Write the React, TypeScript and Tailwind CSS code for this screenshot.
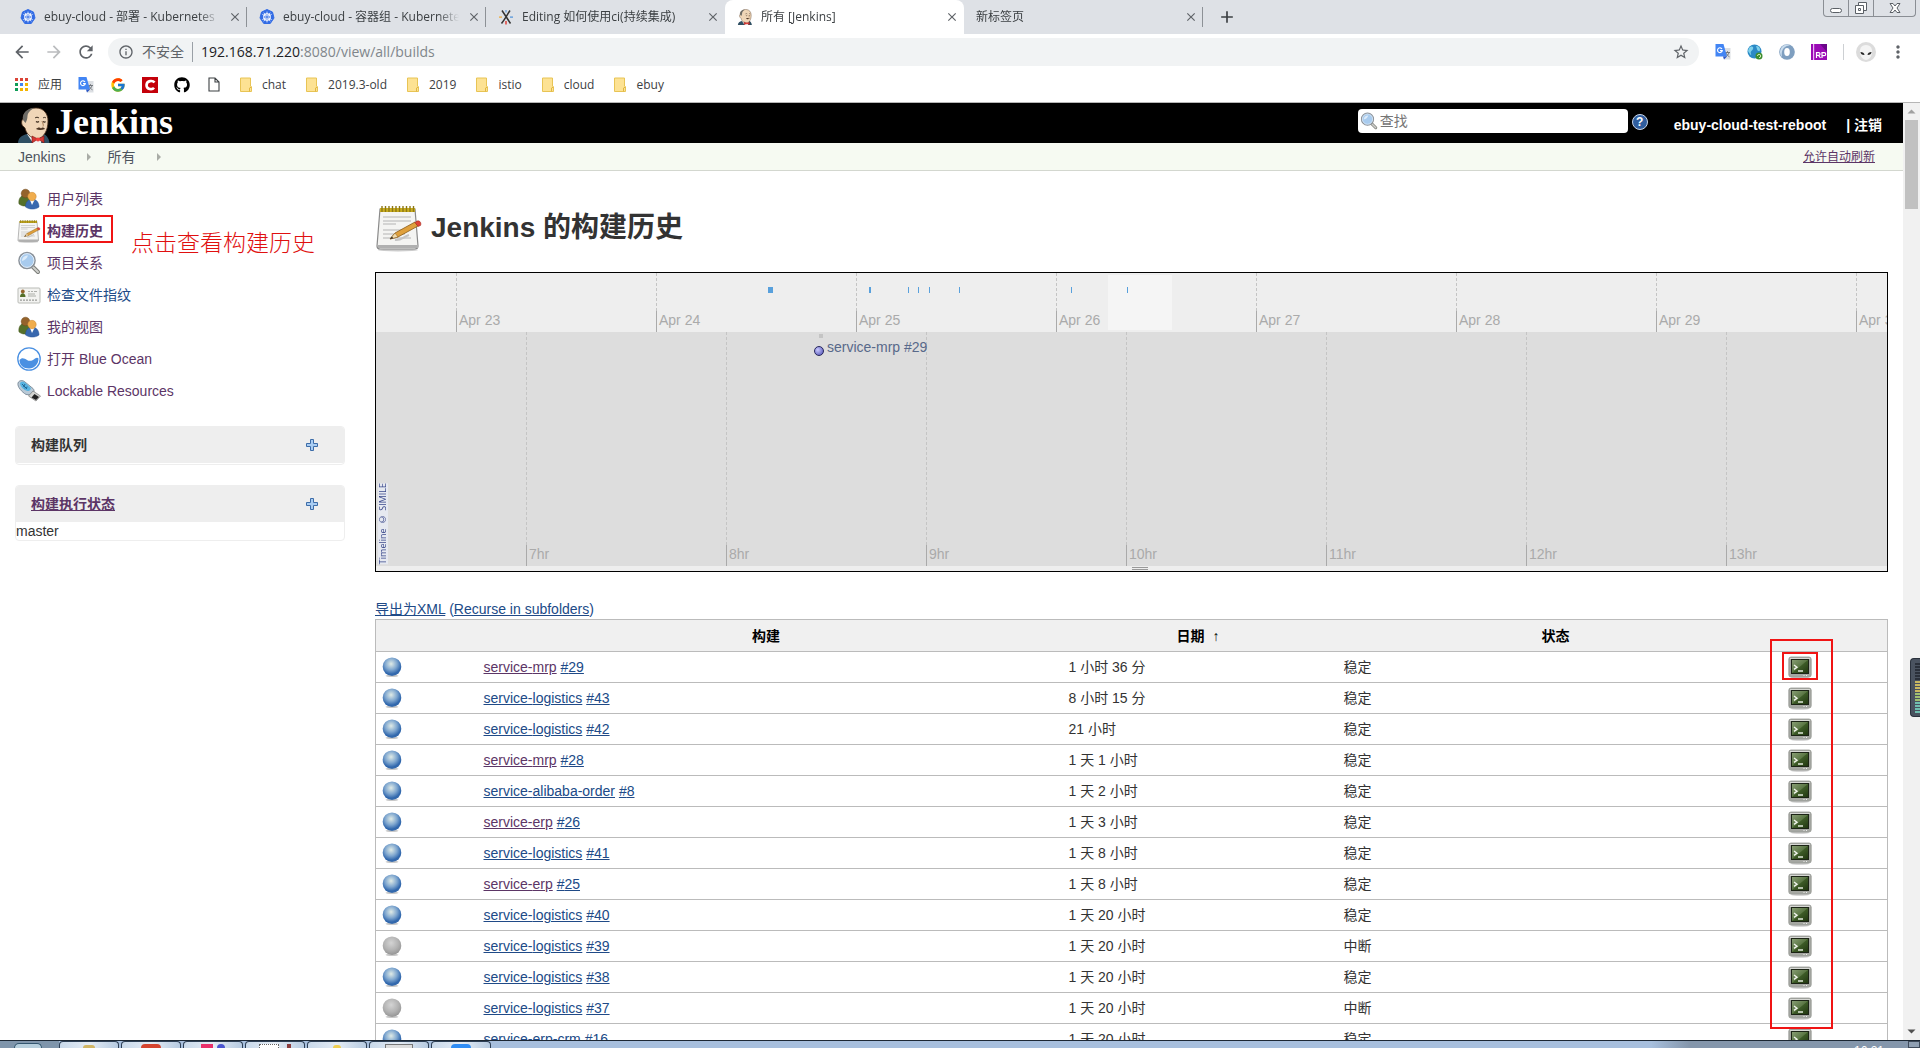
import React from 'react';
import { MdAdd, MdArrowBack, MdArrowForward, MdClose, MdInfoOutline, MdMoreVert, MdRefresh, MdStarBorder } from 'react-icons/md';
import { FaGithub } from 'react-icons/fa';
import { FcGoogle } from 'react-icons/fc';

/* ---------- icons ---------- */

const KubeIcon = () => (
  <svg viewBox="0 0 32 32" className="size-4 shrink-0" aria-hidden="true">
    <path d="M16 1 L27 6.2 L30 18 L22.5 29 H9.5 L2 18 L5 6.2 Z" fill="#326ce5" stroke="#326ce5" strokeWidth="2" strokeLinejoin="round" />
    <circle cx="16" cy="16" r="6.5" fill="none" stroke="#fff" strokeWidth="2.2" />
    <g stroke="#fff" strokeWidth="1.6" strokeLinecap="round">
      <path d="M16 6v20M7.3 11l17.4 10M7.3 21l17.4-10M10 8l12 16M22 8L10 24" />
    </g>
    <circle cx="16" cy="16" r="2" fill="#326ce5" />
  </svg>
);

const WikiIcon = () => (
  <svg viewBox="0 0 16 16" className="size-4 shrink-0" aria-hidden="true">
    <path d="M4 1.500C7 6 9 9 12.500 14.500M12 1.500C9 6 7 10 3.500 14.500" fill="none" stroke="#333" strokeWidth="1.500" />
    <rect x="7.500" y="1" width="1" height="2.500" fill="#4a90d9" />
    <rect x="1" y="7.500" width="3" height="1.200" fill="#f0a830" />
    <rect x="12" y="7.500" width="3" height="1.200" fill="#4a90d9" />
    <rect x="7.300" y="12" width="1.400" height="3.500" fill="#e0342c" />
  </svg>
);

const Butler = ({ className }: { className: string }) => (
  <svg viewBox="0 0 32 36" className={className} aria-hidden="true">
    <path d="M0 36c0-5 4-8 9-9l14-1c5 1 8 5 8.500 10z" fill="#2f4f63" />
    <path d="M9 27l6 9h8l2-9z" fill="#f2f2f2" />
    <path d="M6 20C3 18 3 14 5 12C5 5 11 1 18 1c8 0 12 6 12 13c0 9-4 17-11 18C12 31 8 26 7 21z" fill="#f0d6b7" stroke="#4a2f1b" strokeWidth="0.800" />
    <path d="M5 13C4 6 9 1.500 16 1c-3 2-6 4-6.500 8c0 3-1 5-2 7z" fill="#6d6b66" />
    <path d="M17 11c1-1 3-1 4 0M25 11c1-.8 2-.8 3 0" fill="none" stroke="#3a2a1c" strokeWidth="1" />
    <path d="M18 14.500c1 .8 2 .8 3 0M25 14.500c1 .8 2 .8 2.500 0" fill="none" stroke="#3a2a1c" strokeWidth="1.200" />
    <path d="M24 14c.5 2 2 4 1 5.500" fill="none" stroke="#a87e58" strokeWidth="1" />
    <path d="M18 22c2-2 4-2 5-.5c1-1.500 3-1 4 .5c-3 1-6 1.500-9 0z" fill="#4a3322" />
    <path d="M14 29l6 3-6 4zM26 29l-6 3 6 4z" fill="#d33833" stroke="#7c1512" strokeWidth="0.600" />
    <circle cx="20" cy="32.500" r="2" fill="#ef3d3a" />
  </svg>
);

const TranslateIcon = () => (
  <svg viewBox="0 0 16 16" className="size-4 shrink-0" aria-hidden="true">
    <path d="M6 4h9.500v11.500H9z" fill="#dcdfe3" />
    <path d="M10 8.500h5M12.500 7.200v1.300M14 8.500c-.5 2-2 3.500-3.500 4.300M11 9c.7 1.800 2 3 3.500 3.800" stroke="#6b7076" strokeWidth="0.900" fill="none" />
    <path d="M0.500 0h8l3.500 12.500H0.500z" fill="#4285f4" />
    <path d="M8 12.500h4l-3 3z" fill="#2a56c6" />
    <path d="M7 5A2.400 2.400 0 1 0 7.300 6.600H5" fill="none" stroke="#fff" strokeWidth="1.100" />
  </svg>
);

const AppsIcon = () => (
  <span className="grid grid-cols-3 gap-[2px]" aria-hidden="true">
    {['bg-[#db4437]', 'bg-[#db4437]', 'bg-[#db4437]', 'bg-[#0f9d58]', 'bg-[#4285f4]', 'bg-[#f4b400]', 'bg-[#0f9d58]', 'bg-[#f4b400]', 'bg-[#f4b400]'].map((c, i) => (
      <span key={i} className={`size-[3px] ${c}`} />
    ))}
  </span>
);

const CIcon = () => (
  <svg viewBox="0 0 16 16" className="size-4" aria-hidden="true">
    <rect width="16" height="16" fill="#c4000a" />
    <path d="M12.500 5.500C11 3.500 5 3 4.500 8c0 5 6 4.800 7.500 2.800" fill="none" stroke="#fff" strokeWidth="2.600" />
  </svg>
);

const PageIcon = () => (
  <svg viewBox="0 0 12 15" className="h-[15px] w-3" aria-hidden="true">
    <path d="M1 1h6l4 4v9H1zM7 1v4h4" fill="none" stroke="#3c4043" strokeWidth="1.100" />
  </svg>
);

const FolderIcon = () => (
  <svg viewBox="0 0 12 15" className="h-[15px] w-3" aria-hidden="true">
    <path d="M0.500 1h10v8l1 1v4.500h-11z" fill="#fde293" stroke="#e8c455" />
    <path d="M9.500 14.500v-3.500l2-1" fill="none" stroke="#e0b743" />
  </svg>
);

const People = () => (
  <svg viewBox="0 0 24 24" className="size-6" aria-hidden="true">
    <path d="M2 17c-1-5 2-9 6-9s6 3 6 9c-4 3-9 2.500-12 0z" fill="#55702a" stroke="#45591c" strokeWidth="0.500" />
    <circle cx="8.500" cy="6.500" r="4.300" fill="#94632c" stroke="#70491a" strokeWidth="0.500" />
    <path d="M8.500 20c0-5 3-8 6.500-8s7 2.500 7 8c-4 3-10 2.500-13.500 0z" fill="#3968ae" stroke="#2a5396" strokeWidth="0.500" />
    <path d="M13 13l2 5 2.500-5z" fill="#fff" />
    <circle cx="15" cy="9.500" r="4.200" fill="#f0ad4d" stroke="#c8842c" strokeWidth="0.500" />
  </svg>
);

const Notepad = ({ className }: { className: string }) => (
  <svg viewBox="0 0 48 48" className={className} aria-hidden="true">
    <ellipse cx="23" cy="46" rx="20" ry="1.500" fill="#ccc" />
    <path d="M5 5h35l3 37c0 2-1 3-3 3H5c-2 0-3-1-3-3z" fill="#f4f4f2" stroke="#8a8a8a" strokeWidth="1.200" />
    <path d="M2.500 41h40.500v3H3z" fill="#b0b0b0" />
    <path d="M8 13h28M8 17h28M8 20h13M8 26h26M8 30h22M8 34h28" stroke="#b4b4b4" strokeWidth="1.100" />
    <path d="M5 4h35v4H5z" fill="#c9ad1e" />
    <path d="M7 2v6M10.500 2v6M14 2v6M17.500 2v6M21 2v6M24.500 2v6M28 2v6M31.500 2v6M35 2v6M38.500 2v6" stroke="#8d7814" strokeWidth="1.400" />
    <path d="M20 36c6 1 8-3 14-5" fill="none" stroke="#c4c4c4" strokeWidth="2" />
    <path d="M15 35l5-6 20-11 3 4-20 11z" fill="#dfa03c" stroke="#8a5a17" strokeWidth="0.800" />
    <path d="M15 35l5-6 3 4z" fill="#f1dcae" stroke="#8a5a17" strokeWidth="0.500" />
    <path d="M15 35l2-2.500 1.200 1.700z" fill="#222" />
    <path d="M41 17.500c3-2 6 1 4.500 4l-2.500 1-3-4z" fill="#dd4437" stroke="#982219" strokeWidth="0.500" />
  </svg>
);

const Magnifier = ({ className }: { className: string }) => (
  <svg viewBox="0 0 24 24" className={className} aria-hidden="true">
    <path d="M15 15l6 6" stroke="#7b7d78" strokeWidth="4" strokeLinecap="round" />
    <path d="M16 16l5 5" stroke="#cfd0cd" strokeWidth="2" strokeLinecap="round" />
    <circle cx="10" cy="9.500" r="8" fill="#a8cbee" stroke="#8a9199" strokeWidth="1.600" />
    <circle cx="10" cy="9.500" r="6.900" fill="none" stroke="#e6f0fa" strokeWidth="0.900" />
    <path d="M5 10c0-4 3-5.500 6-5.500c-1 3-3 4.500-6 5.500z" fill="#dcebf9" />
  </svg>
);

const IdCard = () => (
  <svg viewBox="0 0 24 24" className="size-6" aria-hidden="true">
    <rect x="1" y="5" width="22" height="15" rx="1" fill="#f3f3f1" stroke="#b9bbb6" />
    <circle cx="5.800" cy="8.500" r="1.900" fill="#94632c" />
    <path d="M3 14c0-5 5.500-5 5.500 0z" fill="#55702a" />
    <path d="M11 8.500h2M14 8.500h2M17 8.500h3M11 11h7M11 13h8" stroke="#9a9c98" strokeWidth="0.800" />
    <path d="M3 17.200h18" stroke="#999b97" strokeWidth="1.200" strokeDasharray="2 1" />
  </svg>
);

const OceanIcon = () => (
  <svg viewBox="0 0 24 24" className="size-6" aria-hidden="true">
    <circle cx="12" cy="12" r="11.200" fill="#fff" stroke="#4a90e2" strokeWidth="1.300" />
    <path d="M2.500 13c2.500-3 5-1.500 7.500 0s5.500 1 8-1.500c1.500-1 3-.8 3.500 0c0 5.500-4 10-9.500 10S2.500 18 2.500 13z" fill="#4a90e2" />
  </svg>
);

const UsbIcon = () => (
  <svg viewBox="0 0 24 24" className="size-6" aria-hidden="true">
    <path d="M1 4c1-3 5-3 7-1l8 6.500c2 2 1 5-1.500 6.500L9 15.500C5 13 0 8 1 4z" fill="#b9c9d6" stroke="#6d7f8e" strokeWidth="0.800" />
    <path d="M3 4c1.500-2 4-1.500 5.500 0l5 4.500c1 1.500-1 4-3 3.500C7 11 3 8 3 4z" fill="#58b4e2" />
    <path d="M5 5l5 5M8 5l-1.500 3M10.500 8L7.500 9" stroke="#1c5f8c" strokeWidth="0.900" />
    <path d="M16 12l7.500 5-4.500 5-7.500-5z" fill="#d4d5d2" stroke="#777" strokeWidth="0.700" />
    <path d="M17.500 15l4.500 3-3 3-4.500-2.500z" fill="#222" />
  </svg>
);

const PlusIcon = () => (
  <svg viewBox="0 0 12 12" className="size-3" aria-hidden="true">
    <path d="M4.500 0.500h3v4h4v3h-4v4h-3v-4h-4v-3h4z" fill="#a9cdf3" stroke="#3d6ca8" />
  </svg>
);

const Ball = ({ grey }: { grey?: boolean }) => (
  <svg viewBox="0 0 20 20" className="size-5" aria-hidden="true">
    <defs>
      <radialGradient id="ball-blue" cx="0.450" cy="0.350" r="0.650">
        <stop offset="0" stopColor="#e0ebe6" />
        <stop offset="0.500" stopColor="#7ea6cf" />
        <stop offset="0.850" stopColor="#2f66ac" />
        <stop offset="1" stopColor="#3d6fae" />
      </radialGradient>
      <radialGradient id="ball-grey" cx="0.450" cy="0.350" r="0.650">
        <stop offset="0" stopColor="#d4d4d4" />
        <stop offset="0.600" stopColor="#b3b3b3" />
        <stop offset="1" stopColor="#959595" />
      </radialGradient>
    </defs>
    <ellipse cx="10" cy="18.800" rx="6.500" ry="1.200" fill="#c9c9c9" />
    <circle cx="10" cy="9.700" r="9.300" fill={grey ? 'url(#ball-grey)' : 'url(#ball-blue)'} />
  </svg>
);

const Terminal = () => (
  <svg viewBox="0 0 24 24" className="size-6" aria-hidden="true">
    <defs>
      <linearGradient id="screen" x1="0" y1="0" x2="1" y2="1">
        <stop offset="0" stopColor="#8ba077" />
        <stop offset="0.480" stopColor="#5b7745" />
        <stop offset="0.520" stopColor="#3d5b27" />
        <stop offset="1" stopColor="#1f340f" />
      </linearGradient>
    </defs>
    <ellipse cx="12" cy="22.800" rx="9" ry="1" fill="#ccc" />
    <rect x="0.800" y="2" width="22.400" height="20" rx="2.200" fill="#a5a7a2" stroke="#979994" strokeWidth="0.800" />
    <rect x="2" y="3" width="20" height="1" fill="#d7d8d5" />
    <rect x="3.500" y="4.500" width="17" height="14" fill="url(#screen)" stroke="#1c2416" strokeWidth="1" />
    <path d="M6 10l3 2.200-3 2.200" fill="none" stroke="#f2f5ee" strokeWidth="1.400" />
    <path d="M10 16h5" stroke="#e2e8dc" strokeWidth="1.500" />
    <path d="M15.500 20.500h1M18 20.500h1" stroke="#eee" />
  </svg>
);

/* ---------- browser chrome ---------- */

const tabs = [
  { title: 'ebuy-cloud - 部署 - Kubernetes', icon: <KubeIcon />, sep: true },
  { title: 'ebuy-cloud - 容器组 - Kubernetes', icon: <KubeIcon />, sep: true },
  { title: 'Editing 如何使用ci(持续集成)', icon: <WikiIcon />, sep: false },
  { title: '所有 [Jenkins]', icon: <Butler className="size-4 shrink-0" />, active: true },
  { title: '新标签页', icon: null, sep: true },
];

const TabStrip = () => (
  <div className="flex h-[34px] items-stretch bg-[#dee1e6] pl-2">
    {tabs.map((t) => (
      <div
        key={t.title}
        className={`flex w-[239px] items-center gap-2 pr-2 pl-3 ${t.active ? 'rounded-t-lg bg-white' : ''}`}
      >
        {t.icon}
        <span className="min-w-0 flex-1 overflow-hidden text-xs leading-5 whitespace-nowrap text-[#3c4043] [mask-image:linear-gradient(to_right,#000_88%,transparent)]">
          {t.title}
        </span>
        <button type="button" aria-label="关闭" className="text-[#5f6368]">
          <MdClose className="size-[14px]" />
        </button>
        <span className={`-mr-2 -ml-1 h-5 w-px ${t.sep ? 'bg-[#8d9196]' : 'bg-transparent'}`} />
      </div>
    ))}
    <button type="button" aria-label="新标签页" className="ml-[14px] self-center text-[#3c4043]">
      <MdAdd className="size-5" />
    </button>
    <div className="mr-1 ml-auto flex h-[17px] rounded-b border border-t-0 border-[#8a8e94] text-[#5f6368]">
      <button type="button" aria-label="最小化" className="flex w-[25px] items-center justify-center border-r border-[#8a8e94] pt-1">
        <span className="h-[5px] w-3 rounded-sm border border-[#5b6066] bg-white" />
      </button>
      <button type="button" aria-label="还原" className="flex w-[25px] items-center justify-center border-r border-[#8a8e94]">
        <svg viewBox="0 0 14 14" className="size-[14px]" fill="#fff" stroke="#5b6066">
          <path d="M4.500 1.500h8v8h-8z" />
          <path d="M1.500 4.500h8v8h-8zM4.500 7.500h2v2h-2z" />
        </svg>
      </button>
      <button type="button" aria-label="关闭窗口" className="flex w-[41px] items-center justify-center">
        <svg viewBox="0 0 12 12" className="size-3" fill="#fff" stroke="#5b6066">
          <path d="M1 1.500h3l2 2.500 2-2.500h3L8 6l3 4.500H8L6 8l-2 2.500H1L4 6z" />
        </svg>
      </button>
    </div>
  </div>
);

const Toolbar = () => (
  <div className="flex h-9 items-center bg-white px-3">
    <button type="button" aria-label="后退" className="w-8 text-[#5f6368]"><MdArrowBack className="size-5" /></button>
    <button type="button" aria-label="前进" className="w-8 text-[#babcbe]"><MdArrowForward className="size-5" /></button>
    <button type="button" aria-label="重新加载" className="w-8 text-[#5f6368]"><MdRefresh className="size-5" /></button>
    <div className="flex h-7 min-w-0 flex-1 items-center rounded-full bg-[#f1f3f4] pr-[9px] pl-[10px]">
      <MdInfoOutline className="size-4 text-[#5f6368]" />
      <span className="ml-2 text-sm leading-5 text-[#5f6368]">不安全</span>
      <span className="mx-2 h-5 w-px bg-[#9aa0a6]" />
      <span className="flex-1 text-sm leading-5 text-[#80868b]">
        <span className="text-[#202124]">192.168.71.220</span>:8080/view/all/builds
      </span>
      <button type="button" aria-label="加入书签" className="text-[#5f6368]"><MdStarBorder className="size-[18px]" /></button>
    </div>
    <div className="ml-4 flex items-center gap-4">
      <TranslateIcon />
      <svg viewBox="0 0 16 16" className="size-4" aria-hidden="true">
        <circle cx="7.500" cy="7.500" r="7" fill="#2b8ac6" />
        <path d="M2 4c3-3 5-1 4 1S3 7 4 10 2 9 1 7zM9 2c3 0 4 2 4 4s-3 1-3-1z" fill="#7fd0ea" />
        <circle cx="12" cy="12" r="3.500" fill="#3c8c2e" />
        <path d="M10.500 12a1.600 1.600 0 1 1 1.600 1.600" fill="none" stroke="#d5efb9" strokeWidth="1" />
      </svg>
      <svg viewBox="0 0 16 16" className="size-4" aria-hidden="true">
        <circle cx="8" cy="8" r="7.800" fill="#7f9fc0" />
        <path d="M8 .5A7.500 7.500 0 0 0 3 13C2 7 4 2 11 1.200z" fill="#c9dced" />
        <ellipse cx="8" cy="8" rx="2.800" ry="4" fill="#fff" />
      </svg>
      <svg viewBox="0 0 16 16" className="size-4" aria-hidden="true">
        <rect width="16" height="16" fill="#9a0ab5" />
        <path d="M9 0h7v8z" fill="#6b078a" />
        <rect x="2" width="1.200" height="16" fill="#e9b8f2" />
        <path d="M5.500 14V8.700h2.200c1.800 0 1.800 2.600 0 2.600H5.500m2 0L9.500 14M11 14V8.700h2.200c2 0 2 2.900 0 2.900H11" fill="none" stroke="#fff" strokeWidth="1.200" />
      </svg>
      <span className="h-4 w-px bg-[#cdd0d3]" />
      <svg viewBox="0 0 20 20" className="-ml-1 size-5" aria-hidden="true">
        <circle cx="10" cy="10" r="10" fill="#dcdcdc" />
        <path d="M10 3c5 0 6.500 4 6 8s-3.500 7-6 7-5.500-3-6-7 1-8 6-8z" fill="#f4f4f4" />
        <path d="M4.500 10c2 0 4 1 4 3-2.500 0-4-1-4-3zM15.500 10c-2 0-4 1-4 3 2.500 0 4-1 4-3z" fill="#222" />
      </svg>
    </div>
    <button type="button" aria-label="菜单" className="ml-3 text-[#5f6368]"><MdMoreVert className="size-5" /></button>
  </div>
);

const folders = ['chat', '2019.3-old', '2019', 'istio', 'cloud', 'ebuy'];

const Bookmarks = () => (
  <nav className="flex h-[33px] items-center border-b border-[#b6b6b6] bg-white pb-[3px] pl-[15px] text-xs leading-5 text-[#3c4043]">
    <a href="#" className="flex items-center gap-[10px]"><AppsIcon />应用</a>
    <div className="ml-4 flex items-center gap-4">
      <TranslateIcon />
      <FcGoogle className="size-4" />
      <CIcon />
      <FaGithub className="size-4 text-black" />
      <span className="flex w-4 justify-center"><PageIcon /></span>
    </div>
    <div className="ml-[18px] flex items-center gap-5">
      {folders.map((f) => (
        <a key={f} href="#" className="flex items-center gap-[10px]"><FolderIcon />{f}</a>
      ))}
    </div>
  </nav>
);

/* ---------- Jenkins page ---------- */

const JenkinsHeader = () => (
  <header className="flex h-10 items-center bg-black pl-[18px] text-white">
    <a href="#" className="flex h-10 items-end gap-[5px]">
      <Butler className="h-9 w-8" />
      <span className="pb-1 font-['Liberation_Serif',serif] text-4xl leading-[34px] font-bold">Jenkins</span>
    </a>
    <label className="mb-1 ml-auto flex h-6 w-[270px] items-center rounded bg-white pl-[2px]">
      <Magnifier className="size-[18px]" />
      <input type="search" placeholder="查找" aria-label="查找" className="ml-[2px] min-w-0 flex-1 text-sm leading-5 text-black outline-none placeholder:text-[#757575]" />
    </label>
    <a href="#" aria-label="帮助" className="mb-[3px] ml-1 flex size-4 items-center justify-center rounded-full border border-[#c9d6ea] bg-[#2f5d9e] text-xs leading-3 font-bold">?</a>
    <a href="#" className="mt-[3px] ml-[26px] text-sm leading-5 font-bold">ebuy-cloud-test-reboot</a>
    <span className="mt-[3px] mr-[21px] ml-5 text-sm leading-5 font-bold">| <a href="#">注销</a></span>
  </header>
);

const Crumb = () => (
  <svg viewBox="0 0 4 8" className="h-2 w-1" aria-hidden="true"><path d="M0 0l4 4-4 4z" fill="#a9aca6" /></svg>
);

const Breadcrumbs = () => (
  <div className="flex h-7 items-center border-b border-[#d3d7cf] bg-[#f6faf2] pr-7 pl-[18px] text-sm leading-5 text-[#4d545d]">
    <a href="#">Jenkins</a>
    <span className="mr-4 ml-[22px]"><Crumb /></span>
    <a href="#">所有</a>
    <span className="ml-[22px]"><Crumb /></span>
    <a href="#" className="ml-auto text-xs text-[#5c3566] underline">允许自动刷新</a>
  </div>
);

const tasks = [
  { label: '用户列表', icon: <People /> },
  { label: '构建历史', icon: <Notepad className="size-6" />, current: true },
  { label: '项目关系', icon: <Magnifier className="size-6" /> },
  { label: '检查文件指纹', icon: <IdCard />, fresh: true },
  { label: '我的视图', icon: <People /> },
  { label: '打开 Blue Ocean', icon: <OceanIcon /> },
  { label: 'Lockable Resources', icon: <UsbIcon /> },
];

const SidePanel = () => (
  <aside className="w-[345px] shrink-0 pt-3 pl-[15px]">
    <ul>
      {tasks.map((t) => (
        <li key={t.label} className="relative flex h-8 items-center gap-[6px] pl-[2px] text-sm leading-5">
          {t.icon}
          <a href="#" className={t.fresh ? 'text-[#204a87]' : t.current ? 'font-bold text-[#5c3566]' : 'text-[#5c3566]'}>{t.label}</a>
          {t.current && (
            <>
              <span className="absolute top-0 left-7 h-7 w-[70px] border-2 border-[#f01414]" />
              <span className="absolute top-4 left-[116px] text-[23px] leading-6 whitespace-nowrap text-[#e01010] font-light">
                点击查看构建历史
              </span>
            </>
          )}
        </li>
      ))}
    </ul>
    <section className="mt-[19px] overflow-hidden rounded border border-[#eee] pb-px">
      <h2 className="flex h-9 items-center justify-between bg-[#eee] pr-[26px] pl-[15px] text-sm leading-5 font-bold text-[#333]">
        构建队列
        <button type="button" aria-label="展开构建队列"><PlusIcon /></button>
      </h2>
    </section>
    <section className="mt-5 overflow-hidden rounded border border-[#eee]">
      <h2 className="flex h-9 items-center justify-between bg-[#eee] pr-[26px] pl-[15px] text-sm leading-5 font-bold">
        <a href="#" className="text-[#5c3566] underline">构建执行状态</a>
        <button type="button" aria-label="展开构建执行状态"><PlusIcon /></button>
      </h2>
      <p className="text-sm leading-[18px] text-[#333]">master</p>
    </section>
  </aside>
);

const days = ['Apr 23', 'Apr 24', 'Apr 25', 'Apr 26', 'Apr 27', 'Apr 28', 'Apr 29', 'Apr 30'];
const hours = ['7hr', '8hr', '9hr', '10hr', '11hr', '12hr', '13hr'];
const marks = [[392, 5], [493, 2], [532, 1], [542, 1], [553, 1], [583, 1], [695, 1], [751, 1]];

const Ticks = ({ labels, start, at }: { labels: string[]; start: number; at: string }) => (
  <>
    {labels.map((l, i) => (
      <div key={l} className="absolute top-0 bottom-0 flex flex-col text-sm text-[#aaa]" style={{ left: start + i * 200 }}>
        <span className="flex-1 border-l border-dashed border-[#c4c4c4]" />
        <span className={`h-[21px] border-l border-[#aaa] pl-[2px] whitespace-nowrap ${at}`}>{l}</span>
      </div>
    ))}
  </>
);

const Timeline = () => (
  <div className="flex h-[300px] flex-col overflow-hidden border border-black bg-[#eee]">
    <div className="relative h-[59px] overflow-hidden">
      <span className="absolute top-[2px] left-[732px] h-[55px] w-16 bg-[#f5f5f5]" />
      <Ticks labels={days} start={80} at="leading-[18px]" />
      {marks.map(([x, w]) => (
        <span key={x} className="absolute top-[14px] h-[6px] bg-[#58a0dc]" style={{ left: x, width: w }} />
      ))}
    </div>
    <div className="relative flex-1 overflow-hidden bg-[#ddd]">
      <Ticks labels={hours} start={150} at="leading-[18px]" />
      <span className="absolute top-[2px] left-[443px] size-1 bg-[#c4c4c4]" />
      <span className="absolute top-[14px] left-[438px] size-[10px] rounded-full border border-[#26265c] bg-[radial-gradient(circle_at_35%_35%,#c9c9ff,#4a4ab0)]" />
      <a href="#" className="absolute top-[5px] left-[451px] text-sm leading-5 text-[#58698a]">service-mrp #29</a>
      <span className="absolute bottom-[2px] left-[2px] rotate-180 bg-[#e6e9f0] font-['Open_Sans',sans-serif] text-[9px] leading-[10px] whitespace-nowrap text-[#3c4a8c] [writing-mode:vertical-rl]">
        Timeline © SIMILE
      </span>
    </div>
    <div className="flex h-[5px] items-center justify-center pl-4">
      <span className="h-[3px] w-4 border-y border-[#999]" />
    </div>
  </div>
);

const builds = [
  { job: 'mrp', n: 29, date: '1 小时 36 分', visited: true },
  { job: 'logistics', n: 43, date: '8 小时 15 分' },
  { job: 'logistics', n: 42, date: '21 小时' },
  { job: 'mrp', n: 28, date: '1 天 1 小时', visited: true },
  { job: 'alibaba-order', n: 8, date: '1 天 2 小时' },
  { job: 'erp', n: 26, date: '1 天 3 小时', visited: true },
  { job: 'logistics', n: 41, date: '1 天 8 小时' },
  { job: 'erp', n: 25, date: '1 天 8 小时', visited: true },
  { job: 'logistics', n: 40, date: '1 天 20 小时' },
  { job: 'logistics', n: 39, date: '1 天 20 小时', aborted: true },
  { job: 'logistics', n: 38, date: '1 天 20 小时' },
  { job: 'logistics', n: 37, date: '1 天 20 小时', aborted: true },
  { job: 'erp-crm', n: 16, date: '1 天 20 小时' },
];

const BuildTable = () => (
  <div className="relative">
    <table className="w-full table-fixed border-collapse border border-[#bbb] text-sm leading-5 text-[#333]">
      <colgroup>
        <col className="w-[100px]" />
        <col />
        <col className="w-[275px]" />
        <col className="w-[440px]" />
        <col className="w-28" />
      </colgroup>
      <thead>
        <tr className="h-8 border-b border-[#bbb] bg-[#f0f0f0] text-black">
          <th aria-label="结果" />
          <th className="pr-1">构建</th>
          <th>日期 <span className="ml-1 font-normal">↑</span></th>
          <th>状态</th>
          <th aria-label="控制台" />
        </tr>
      </thead>
      <tbody>
        {builds.map((b) => (
          <tr key={b.job + b.n} className="h-[31px] border-b border-[#bbb]">
            <td className="pl-[6px]"><Ball grey={b.aborted} /></td>
            <td className="pl-2">
              <a href="#" className={b.visited ? 'text-[#5c3566] underline' : 'text-[#204a87] underline'}>service-{b.job}</a>{' '}
              <a href="#" className="text-[#204a87] underline">#{b.n}</a>
            </td>
            <td className="pl-2">{b.date}</td>
            <td className="pl-2">{b.aborted ? '中断' : '稳定'}</td>
            <td className="pl-3"><a href="#" aria-label="控制台输出" className="inline-block align-middle"><Terminal /></a></td>
          </tr>
        ))}
      </tbody>
    </table>
    <span className="absolute top-5 right-[55px] h-[390px] w-[63px] border-2 border-[#f01414]" />
    <span className="absolute top-[33px] right-[70px] h-7 w-9 border-2 border-[#f01414]" />
  </div>
);

const Scrollbar = () => (
  <div className="flex w-[17px] shrink-0 flex-col items-center bg-[#f1f1f1]">
    <svg viewBox="0 0 17 17" className="size-[17px]" aria-hidden="true"><path d="M4.500 10.500L8.500 6.500l4 4z" fill="#a0a0a0" /></svg>
    <span className="h-[89px] w-[13px] bg-[#c1c1c1]" />
    <svg viewBox="0 0 17 17" className="mt-auto size-[17px]" aria-hidden="true"><path d="M4.500 6.500l4 4 4-4z" fill="#505050" /></svg>
  </div>
);

const LevelMeter = () => (
  <div className="absolute top-[658px] right-0 flex h-[59px] w-[10px] flex-col items-end justify-center gap-px rounded-l border border-r-0 border-[#2b323d] bg-[#4a5360]">
    {Array.from({ length: 17 }, (_, i) => (
      <span key={i} className={`h-[2px] w-[5px] ${i < 6 ? 'bg-[#2a303a]' : i < 10 ? 'bg-[#c9b860]' : i < 13 ? 'bg-[#9fc070]' : 'bg-[#6fbfb0]'}`} />
    ))}
  </div>
);

const taskIcons = [
  <span className="h-[3px] w-3 rounded-t bg-[#d1b665]" />,
  <span className="h-[4px] w-5 rounded-t-full bg-[#d5452f]" />,
  <span className="flex gap-1"><i className="h-1 w-3 bg-[#e8306a]" /><i className="h-1 w-2 rounded-t-full bg-[#4b55d0]" /></span>,
  <span className="flex gap-2"><i className="h-1 w-5 border border-b-0 border-dotted border-[#666] bg-white" /><i className="h-1 w-1 bg-[#8a3c3c]" /></span>,
  <span className="h-[3px] w-2 rounded-t-full bg-[#f0cf52]" />,
  <span className="h-1 w-7 border border-b-0 border-[#777] bg-[#ddd]" />,
  <span className="h-1 w-5 rounded-t-full bg-[#2f8df5]" />,
];

const Taskbar = () => (
  <footer className="flex h-2 items-stretch overflow-hidden border-t border-[#1c2733] bg-[linear-gradient(to_right,#a7bfdd_0,#a7bfdd_86%,#8496ab_88%,#8496ab_100%)]">
    <button type="button" aria-label="开始" className="flex w-[59px] items-end justify-center bg-[#7f95ab] pr-1">
      <span className="h-[5px] w-7 rounded-t-full border border-b-0 border-[#33566f] bg-[#b7cfdd]" />
    </button>
    <div className="flex gap-[2px]">
      {taskIcons.map((icon, i) => (
        <button key={i} type="button" aria-label={`任务 ${i + 1}`} className="flex w-[60px] items-end justify-center rounded-t-sm border border-b-0 border-[#2d3f55] bg-[linear-gradient(to_right,#c9d9ea,#e4ecf5,#b7cbe1)]">
          {icon}
        </button>
      ))}
    </div>
    <span className="mt-[2px] mr-6 ml-auto text-xs leading-4 text-white">16:21</span>
    <span className="w-3 border border-[#3e4a5a] bg-[#8f9fb2]" />
  </footer>
);

export default function App() {
  return (
    <div className="relative flex h-screen flex-col overflow-hidden bg-white font-['Liberation_Sans','Noto_Sans_CJK_SC',sans-serif]">
      <div className="shrink-0 font-['Open_Sans','Noto_Sans_CJK_SC',sans-serif]">
        <TabStrip />
        <Toolbar />
        <Bookmarks />
      </div>
      <div className="flex min-h-0 flex-1">
        <div className="min-w-0 flex-1 overflow-hidden">
          <JenkinsHeader />
          <Breadcrumbs />
          <div className="flex">
            <SidePanel />
            <main className="min-w-0 flex-1 pr-[15px] pl-[30px]">
              <h1 className="mt-[33px] mb-5 flex items-center gap-2 text-[28px] leading-[48px] font-bold text-[#333]">
                <Notepad className="size-12" />
                Jenkins 的构建历史
              </h1>
              <Timeline />
              <p className="mt-[27px] text-sm leading-5 text-[#204a87]">
                <a href="#" className="underline">导出为XML</a> (<a href="#" className="underline">Recurse in subfolders</a>)
              </p>
              <BuildTable />
            </main>
          </div>
        </div>
        <Scrollbar />
      </div>
      <Taskbar />
      <LevelMeter />
    </div>
  );
}
